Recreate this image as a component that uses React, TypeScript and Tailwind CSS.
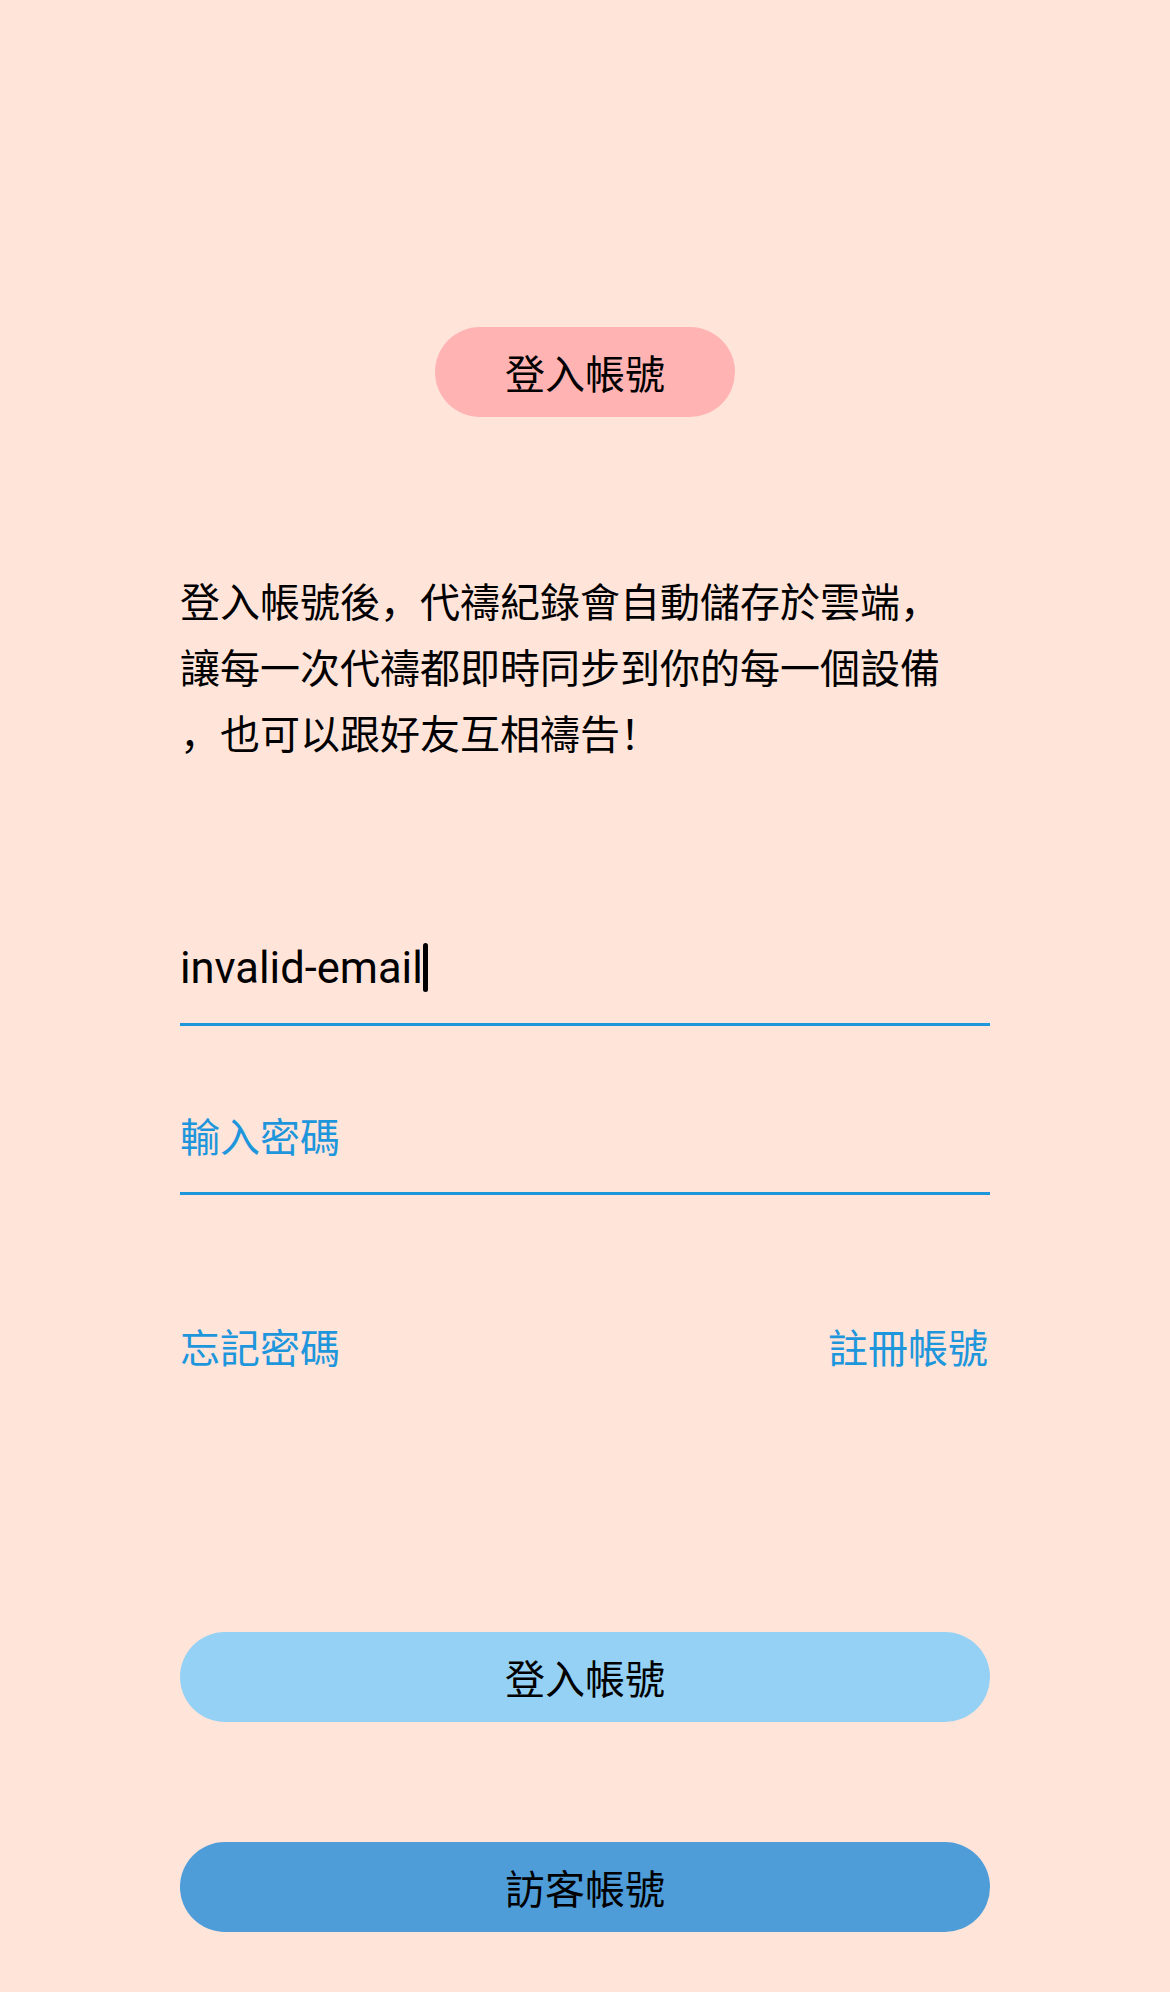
import React from "react";

const latin = "font-['Roboto','Noto_Sans_CJK_SC',sans-serif]";
const cjk = "font-['Noto_Sans_CJK_SC','Noto_Sans_CJK_TC',sans-serif]";

// the intro text wraps exactly like the app, comma at the start of line 3
const introLines = [
  "登入帳號後，代禱紀錄會自動儲存於雲端，",
  "讓每一次代禱都即時同步到你的每一個設備",
  "，也可以跟好友互相禱告！",
];

function PillButton({ label, color }: { label: string; color: string }) {
  return (
    <button
      className={`flex h-[90px] w-full items-center justify-center rounded-full ${color} ${cjk} text-[40px] leading-[50px] text-black`}
    >
      {label}
    </button>
  );
}

export default function App() {
  return (
    <div className="flex min-h-screen w-full flex-col items-center bg-[#ffe4da] pt-[327px]">
      <button
        className={`flex h-[90px] w-[300px] items-center justify-center rounded-full bg-[#ffb3b3] ${cjk} text-[40px] leading-[50px] text-black`}
      >
        登入帳號
      </button>

      <div className="flex w-[810px] flex-col">
        <div className={`mt-[150px] ${cjk} text-[40px] leading-[66px] text-black`}>
          {introLines.map((line) => (
            <div key={line} className="whitespace-nowrap">
              {line}
            </div>
          ))}
        </div>

        {/* email field, focused */}
        <div className="mt-[179px] border-b-[3px] border-[#1e96dc] pb-[29px]">
          <div className="flex items-start">
            <span className={`${latin} text-[43.5px] leading-[50px] text-black`}>
              invalid-email
            </span>
            <span className="mt-[-1px] h-[49px] w-[5px] rounded-full bg-black" />
          </div>
        </div>

        {/* password field, placeholder */}
        <div className="mt-[84px] border-b-[3px] border-[#1e96dc] pb-[32px]">
          <div className={`${cjk} text-[40px] leading-[50px] text-[#1e96dc]`}>
            輸入密碼
          </div>
        </div>

        <div
          className={`mt-[126px] flex items-center justify-between pr-[2px] ${cjk} text-[40px] leading-[50px] text-[#1e96dc]`}
        >
          <a>忘記密碼</a>
          <a>註冊帳號</a>
        </div>

        <div className="mt-[261px] flex flex-col gap-[120px] pb-[60px]">
          <PillButton label="登入帳號" color="bg-[#95d1f4]" />
          <PillButton label="訪客帳號" color="bg-[#4e9cd8]" />
        </div>
      </div>
    </div>
  );
}
